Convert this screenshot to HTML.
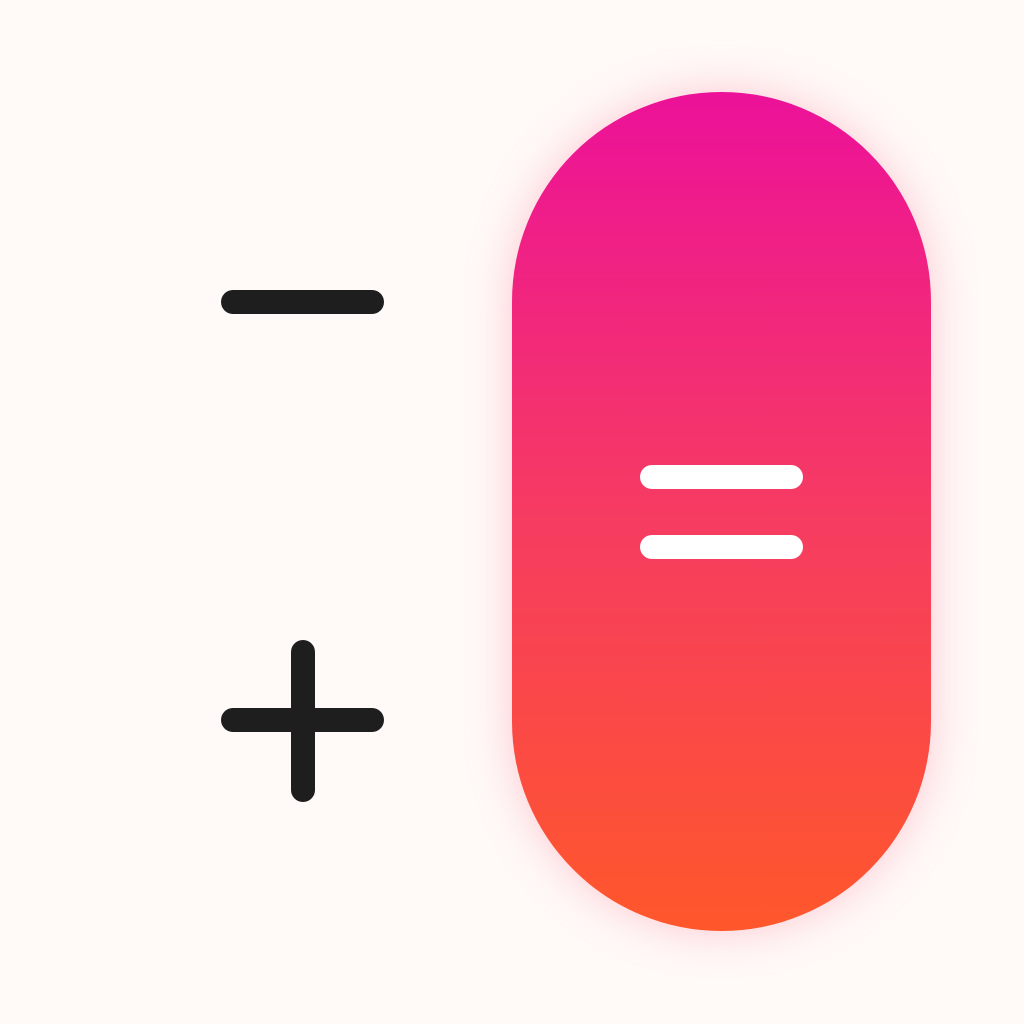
<!DOCTYPE html>
<html><head><style>
html,body{margin:0;padding:0;background:#fff9f7;width:1024px;height:1024px;overflow:hidden}
</style></head><body>
<svg width="1024" height="1024" viewBox="0 0 1024 1024" xmlns="http://www.w3.org/2000/svg">
<defs>
<linearGradient id="g" x1="0" y1="0" x2="0" y2="1">
<stop offset="0" stop-color="#ec1199"/>
<stop offset="0.5" stop-color="#f63b62"/>
<stop offset="1" stop-color="#ff572b"/>
</linearGradient>
<filter id="s" x="-50%" y="-50%" width="200%" height="200%">
<feGaussianBlur stdDeviation="22"/>
</filter>
</defs>
<rect width="1024" height="1024" fill="#fff9f7"/>
<rect x="512" y="92" width="419" height="839" rx="209.5" fill="#f9a0b4" opacity="0.55" filter="url(#s)"/>
<rect x="512" y="92" width="419" height="839" rx="209.5" fill="url(#g)"/>
<g stroke="#1e1e1e" stroke-width="24" stroke-linecap="round">
<line x1="233" y1="302" x2="372" y2="302"/>
<line x1="233" y1="720" x2="372" y2="720"/>
<line x1="303" y1="652" x2="303" y2="790"/>
</g>
<g stroke="#ffffff" stroke-width="24" stroke-linecap="round">
<line x1="652" y1="477" x2="791" y2="477"/>
<line x1="652" y1="547" x2="791" y2="547"/>
</g>
</svg>
</body></html>
